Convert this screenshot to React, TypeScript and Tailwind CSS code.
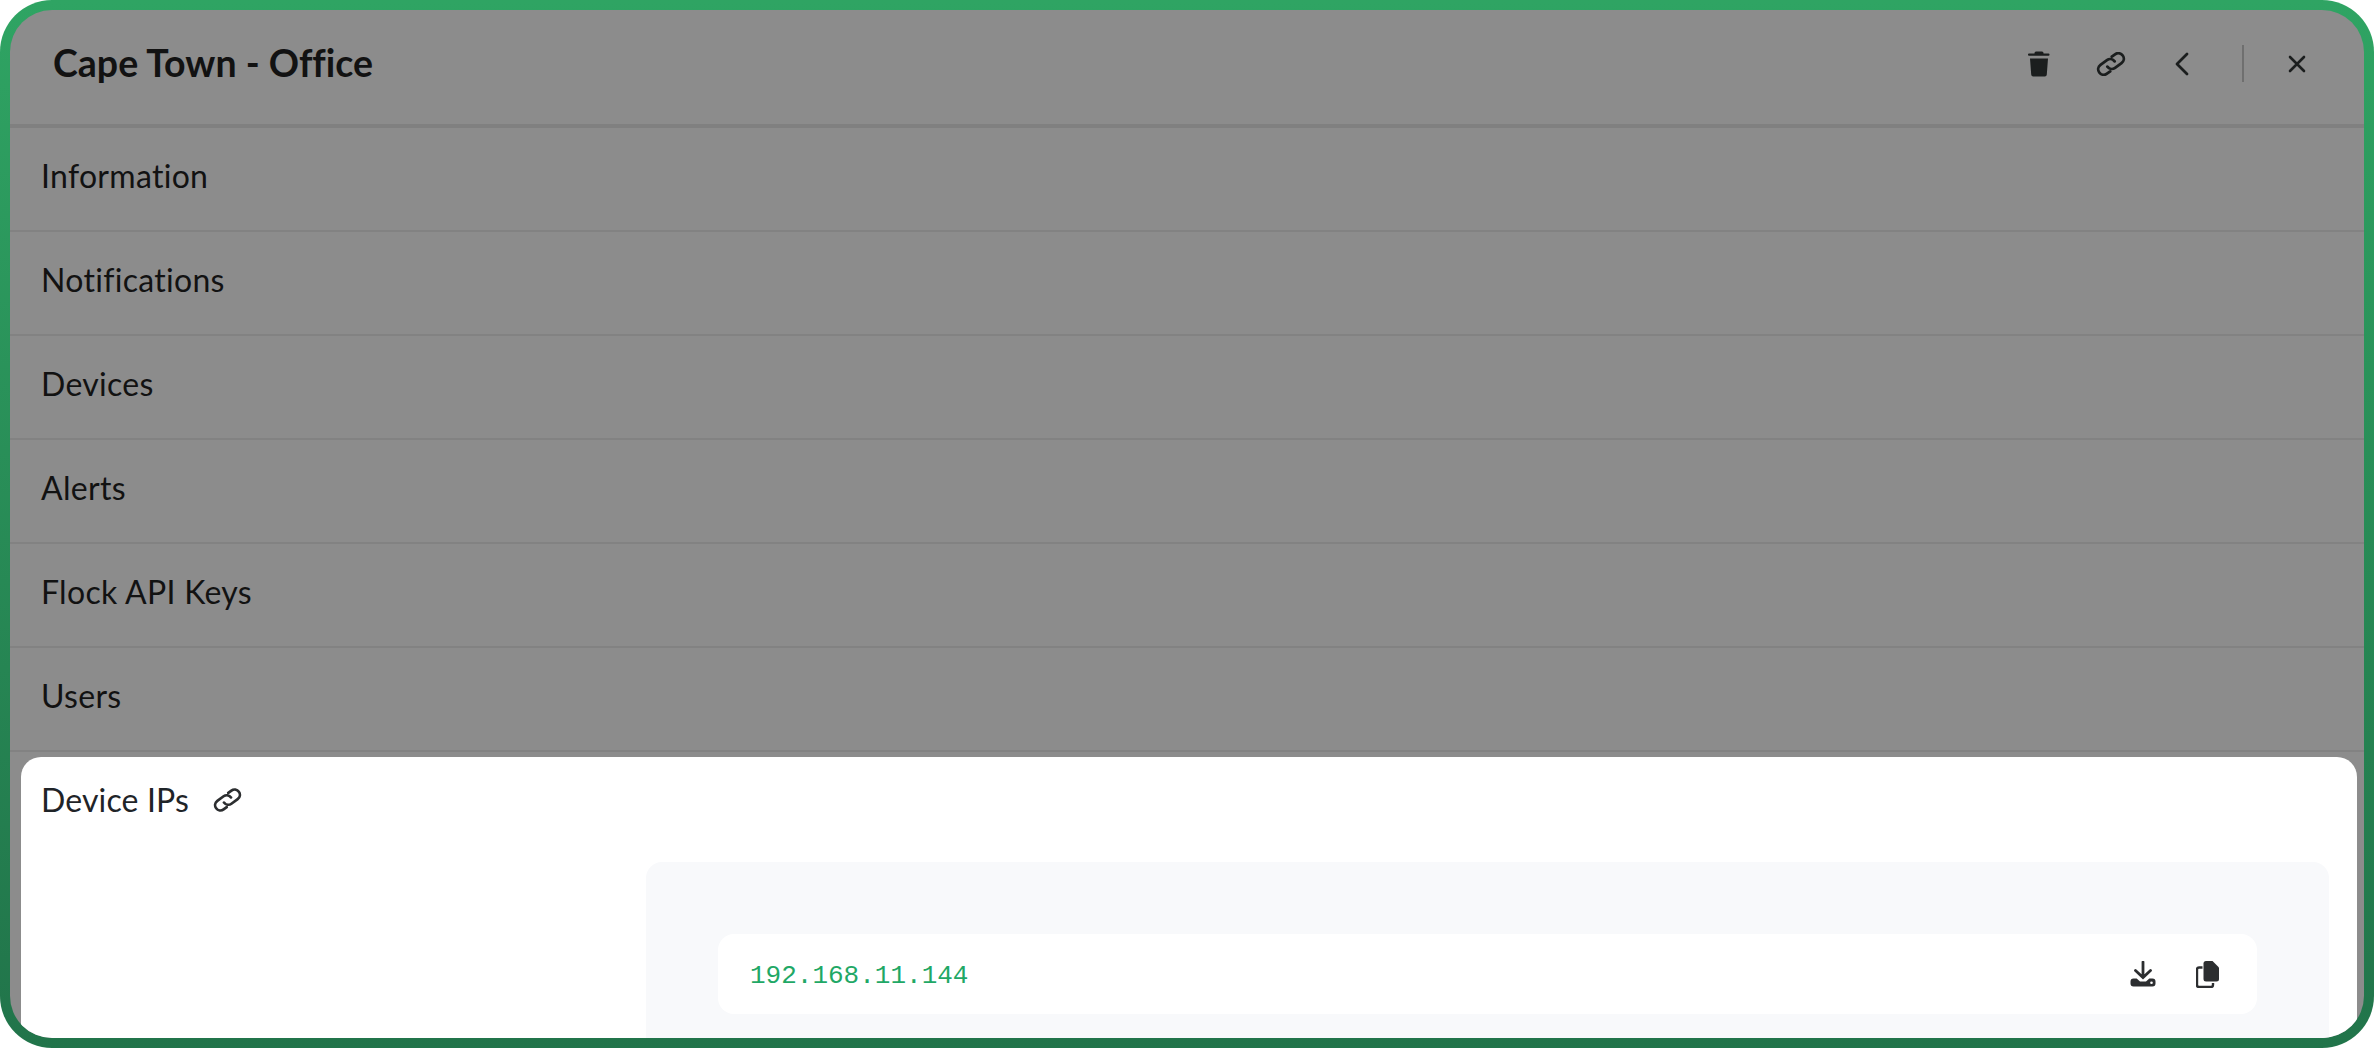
const sectionNames = ['Information', 'Notifications', 'Devices', 'Alerts', 'Flock API Keys', 'Users'];

function LinkIcon({ className }: { className?: string }) {
  return (
    <svg viewBox="0 0 30 24" fill="none" stroke="currentColor" strokeWidth="2.8" strokeLinecap="round" className={className}>
      <g transform="rotate(-36 15 12)">
        <path d="M10 17.500H6a5.500 5.500 0 0 1 0-11h8a5.500 5.500 0 0 1 5.500 5.500" />
        <path d="M20 6.500h4a5.500 5.500 0 0 1 0 11h-8a5.500 5.500 0 0 1-5.500-5.500" />
      </g>
    </svg>
  );
}

function TrashIcon() {
  return (
    <svg viewBox="0 0 22 26" className="h-[26px] w-[22px] text-[#1b1e1e]" fill="currentColor">
      <path d="M8 0.5h6a1.5 1.5 0 0 1 1.5 1.5v.6h5a1 1 0 0 1 1 1v.2a1 1 0 0 1-1 1H1a1 1 0 0 1-1-1v-.2a1 1 0 0 1 1-1h5.5V2A1.500 1.500 0 0 1 8 .5z" />
      <path d="M2 7.500h18l-1.200 16a2 2 0 0 1-2 1.900H5.200a2 2 0 0 1-2-1.900z" />
    </svg>
  );
}

function DownloadIcon() {
  return (
    <svg viewBox="0 0 26 26" className="h-[26px] w-[26px] text-[#2c2e30]" fill="none">
      <path d="M13 1v14M5.500 9.500L13 16.500l7.500-7" stroke="currentColor" strokeWidth="2.800" strokeLinecap="round" />
      <path d="M3.500 17.500h3.200l3.300 3h6l3.300-3h3.200a3 3 0 0 1 3 3v2a3 3 0 0 1-3 3h-19a3 3 0 0 1-3-3v-2a3 3 0 0 1 3-3z" fill="currentColor" />
      <circle cx="21.500" cy="21.800" r="1.300" fill="#fff" />
    </svg>
  );
}

function CopyIcon() {
  return (
    <svg viewBox="0 0 23 27" className="h-[27px] w-[23px] text-[#2c2e30]" fill="none">
      <path d="M6.500 6.500H3a2 2 0 0 0-2 2V24a2 2 0 0 0 2 2h12a2 2 0 0 0 2-2v-2" stroke="currentColor" strokeWidth="2.400" />
      <path d="M10 0h6.500L23 6.500V18a2.500 2.500 0 0 1-2.500 2.500H10A2.500 2.500 0 0 1 7.500 18V2.500A2.500 2.500 0 0 1 10 0z" fill="currentColor" />
    </svg>
  );
}

function ChevronIcon() {
  return (
    <svg viewBox="0 0 14 24" className="h-[24px] w-[14px] text-[#1b1e1e]" fill="none" stroke="currentColor" strokeWidth="2.800" strokeLinecap="round" strokeLinejoin="round">
      <path d="M12 2L2 12l10 10" />
    </svg>
  );
}

function CloseIcon() {
  return (
    <svg viewBox="0 0 18 18" className="h-[18px] w-[18px] text-[#1b1e1e]" fill="none" stroke="currentColor" strokeWidth="2.600" strokeLinecap="round">
      <path d="M2 2l14 14M16 2L2 16" />
    </svg>
  );
}

export default function App() {
  return (
    <div className="h-[1048px] w-full bg-white font-['Lato','Open_Sans',sans-serif] [font-variant-ligatures:none]">
      <div className="h-full rounded-[52px] bg-gradient-to-b from-[#2fa463] to-[#21744a] p-[10px]">
        <div className="flex h-full flex-col overflow-hidden rounded-[42px] bg-[#8c8c8c]">
          <header className="flex h-[118px] shrink-0 items-center justify-between border-b-4 border-[#808080] pb-[7px] pl-[43px] pr-[58px]">
            <h1 className="text-[37.5px] font-bold text-[#121212]">Cape Town - Office</h1>
            <div className="flex items-center text-[#1b1e1e]">
              <TrashIcon />
              <LinkIcon className="ml-[46px] h-[24px] w-[30px]" />
              <div className="ml-[49px]"><ChevronIcon /></div>
              <div className="ml-[53px] h-[37px] w-[2px] bg-[#6f6f6f]" />
              <div className="ml-[44px]"><CloseIcon /></div>
            </div>
          </header>
          {sectionNames.map((name) => (
            <div key={name} className="flex h-[104px] shrink-0 items-center border-b-2 border-[#828282] pb-[7px] pl-[31px] text-[32px] tracking-[0.3px] text-[#121212]">
              {name}
            </div>
          ))}
          <section className="ml-[11px] mr-[7px] mt-[5px] flex min-h-0 flex-1 flex-col overflow-hidden rounded-t-[20px] bg-white">
            <div className="flex h-[86px] shrink-0 items-center pl-[20px] text-[32px] tracking-[0.15px] text-[#1f2428]">
              Device IPs
              <LinkIcon className="ml-[24px] h-[24px] w-[29px] text-[#2c2e30]" />
            </div>
            <div className="ml-[625px] mr-[28px] mt-[19px] flex-1 rounded-t-[16px] bg-[#f8f9fb] px-[72px] pt-[72px]">
              <div className="flex h-[80px] items-center justify-between rounded-[16px] bg-white pl-[32px] pr-[38px]">
                <span className="pt-[5px] font-['Liberation_Mono',monospace] text-[26px] text-[#1fa866]">192.168.11.144</span>
                <div className="flex items-center gap-[40px]">
                  <DownloadIcon />
                  <CopyIcon />
                </div>
              </div>
            </div>
          </section>
        </div>
      </div>
    </div>
  );
}
